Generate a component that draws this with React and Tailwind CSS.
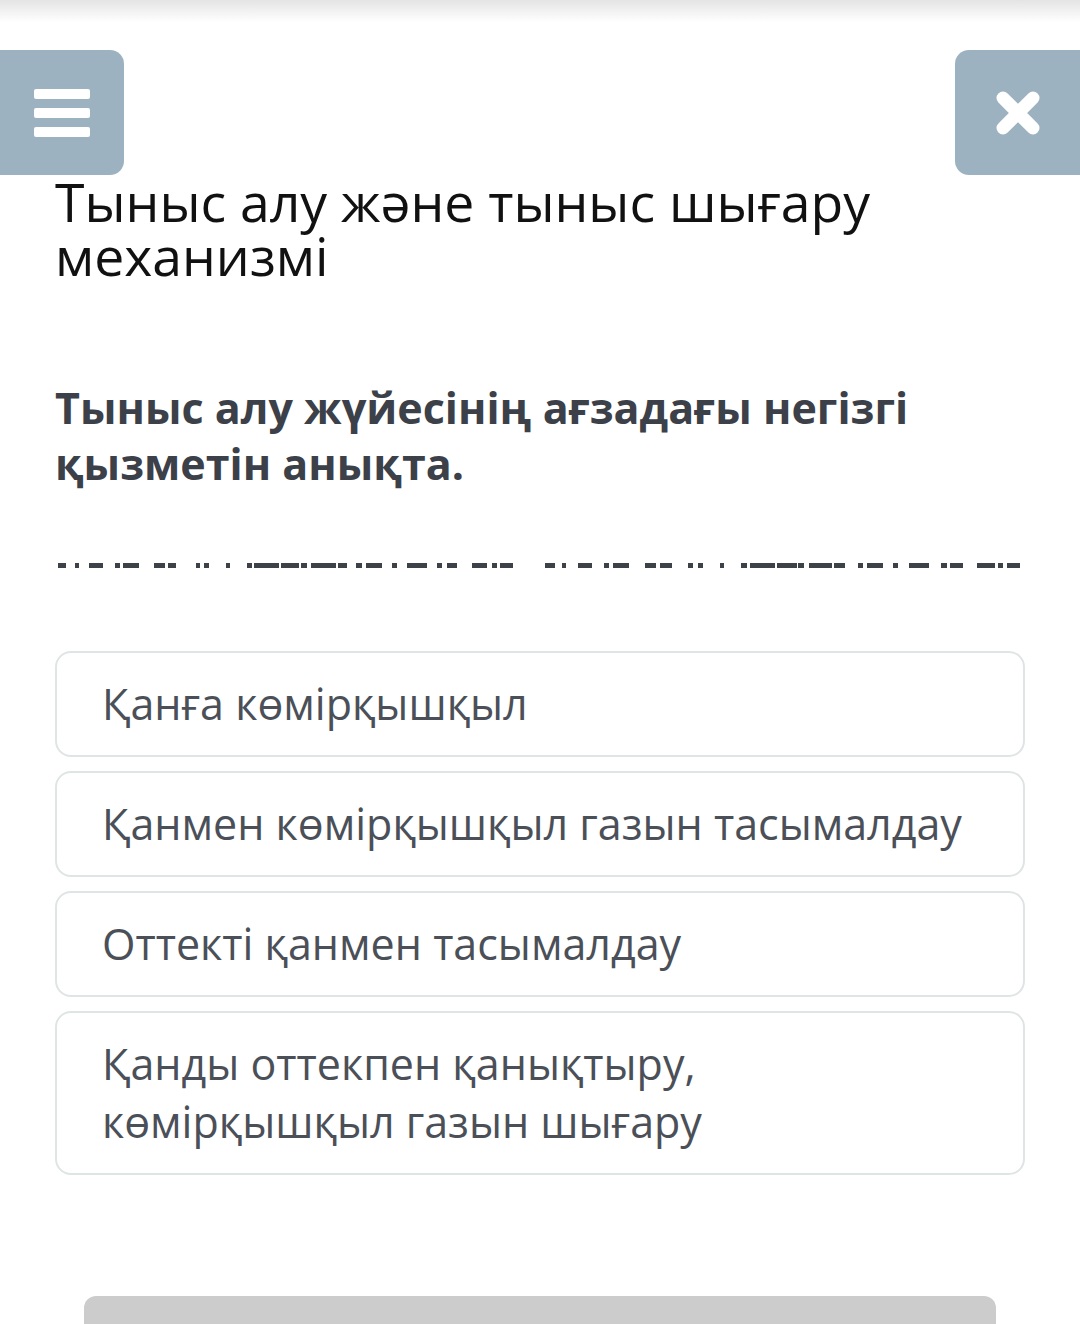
import React from "react";

const OPTIONS = [
  ["Қанға көмірқышқыл"],
  ["Қанмен көмірқышқыл газын тасымалдау"],
  ["Оттекті қанмен тасымалдау"],
  ["Қанды оттекпен қанықтыру,", "көмірқышқыл газын шығару"],
];

// redacted answer line: [x1, x2] dash segments
const DASHES = [
  [58, 66], [75, 79], [89, 103], [115, 120], [123, 139], [154, 165], [168, 176],
  [196, 200], [204, 209], [226, 230], [247, 252], [254, 279], [281, 299], [301, 307],
  [311, 336], [338, 347], [356, 362], [366, 382], [392, 397], [407, 427], [437, 442],
  [447, 457], [472, 487], [492, 497], [500, 513],
  [545, 555], [562, 566], [578, 592], [604, 609], [613, 629], [645, 656], [660, 672],
  [688, 693], [698, 703], [720, 724], [741, 747], [750, 775], [777, 797], [798, 804],
  [809, 832], [834, 845], [858, 863], [867, 883], [893, 898], [909, 929], [941, 947],
  [950, 963], [977, 995], [998, 1003], [1007, 1020],
];

const MenuIcon = () => (
  <div className="flex flex-col gap-[9px] w-[56px]">
    <span className="block h-[10px] rounded-[2px] bg-white" />
    <span className="block h-[10px] rounded-[2px] bg-white" />
    <span className="block h-[10px] rounded-[2px] bg-white" />
  </div>
);

const CloseIcon = () => (
  <svg width="46" height="46" viewBox="0 0 46 46">
    <path d="M8 8 L38 38 M38 8 L8 38" stroke="#fff" strokeWidth="13" strokeLinecap="round" />
  </svg>
);

const App = () => {
  return (
    <div
      className="w-[1080px] h-[1324px] overflow-hidden bg-white"
      style={{ fontFamily: '"Open Sans", "Noto Sans", sans-serif' }}
    >
      {/* top shadow */}
      <div className="h-[22px] bg-gradient-to-b from-[#e4e4e4] to-white" />

      {/* toolbar */}
      <div className="mt-[28px] flex justify-between">
        <button className="w-[124px] h-[125px] bg-[#9db2c0] rounded-r-[14px] flex items-center justify-center">
          <MenuIcon />
        </button>
        <button className="w-[125px] h-[125px] bg-[#9db2c0] rounded-l-[14px] flex items-center justify-center">
          <CloseIcon />
        </button>
      </div>

      <div className="pl-[55px] pr-[40px]">
        {/* title */}
        <h1 className="text-[53.5px] leading-[54px] text-[#111111] font-normal">
          Тыныс алу және тыныс шығару механизмі
        </h1>

        {/* question */}
        <h2 className="mt-[97px] text-[43px] leading-[56px] font-bold text-[#3c4049]">
          Тыныс алу жүйесінің ағзадағы негізгі қызметін анықта.
        </h2>
      </div>

      {/* answer line */}
      <svg className="block mt-[71px]" width="1080" height="5">
        {DASHES.map(([a, b], i) => (
          <rect key={i} x={a} y="0" width={b - a} height="5" fill="#3d4148" />
        ))}
      </svg>

      {/* options */}
      <div className="mt-[83px] ml-[55px] w-[970px] flex flex-col gap-[14px]">
        {OPTIONS.map((lines, i) => (
          <div
            key={i}
            className="border-2 border-[#dfe4e4] rounded-[16px] px-[45px] py-[22px] text-[43px] leading-[58px] text-[#4b5058]"
          >
            {lines.map((l) => (
              <div key={l}>{l}</div>
            ))}
          </div>
        ))}
      </div>

      {/* bottom button */}
      <div className="mt-[121px] ml-[84px] w-[912px] h-[60px] bg-[#cccccc] rounded-t-[12px]" />
    </div>
  );
};

export default App;
